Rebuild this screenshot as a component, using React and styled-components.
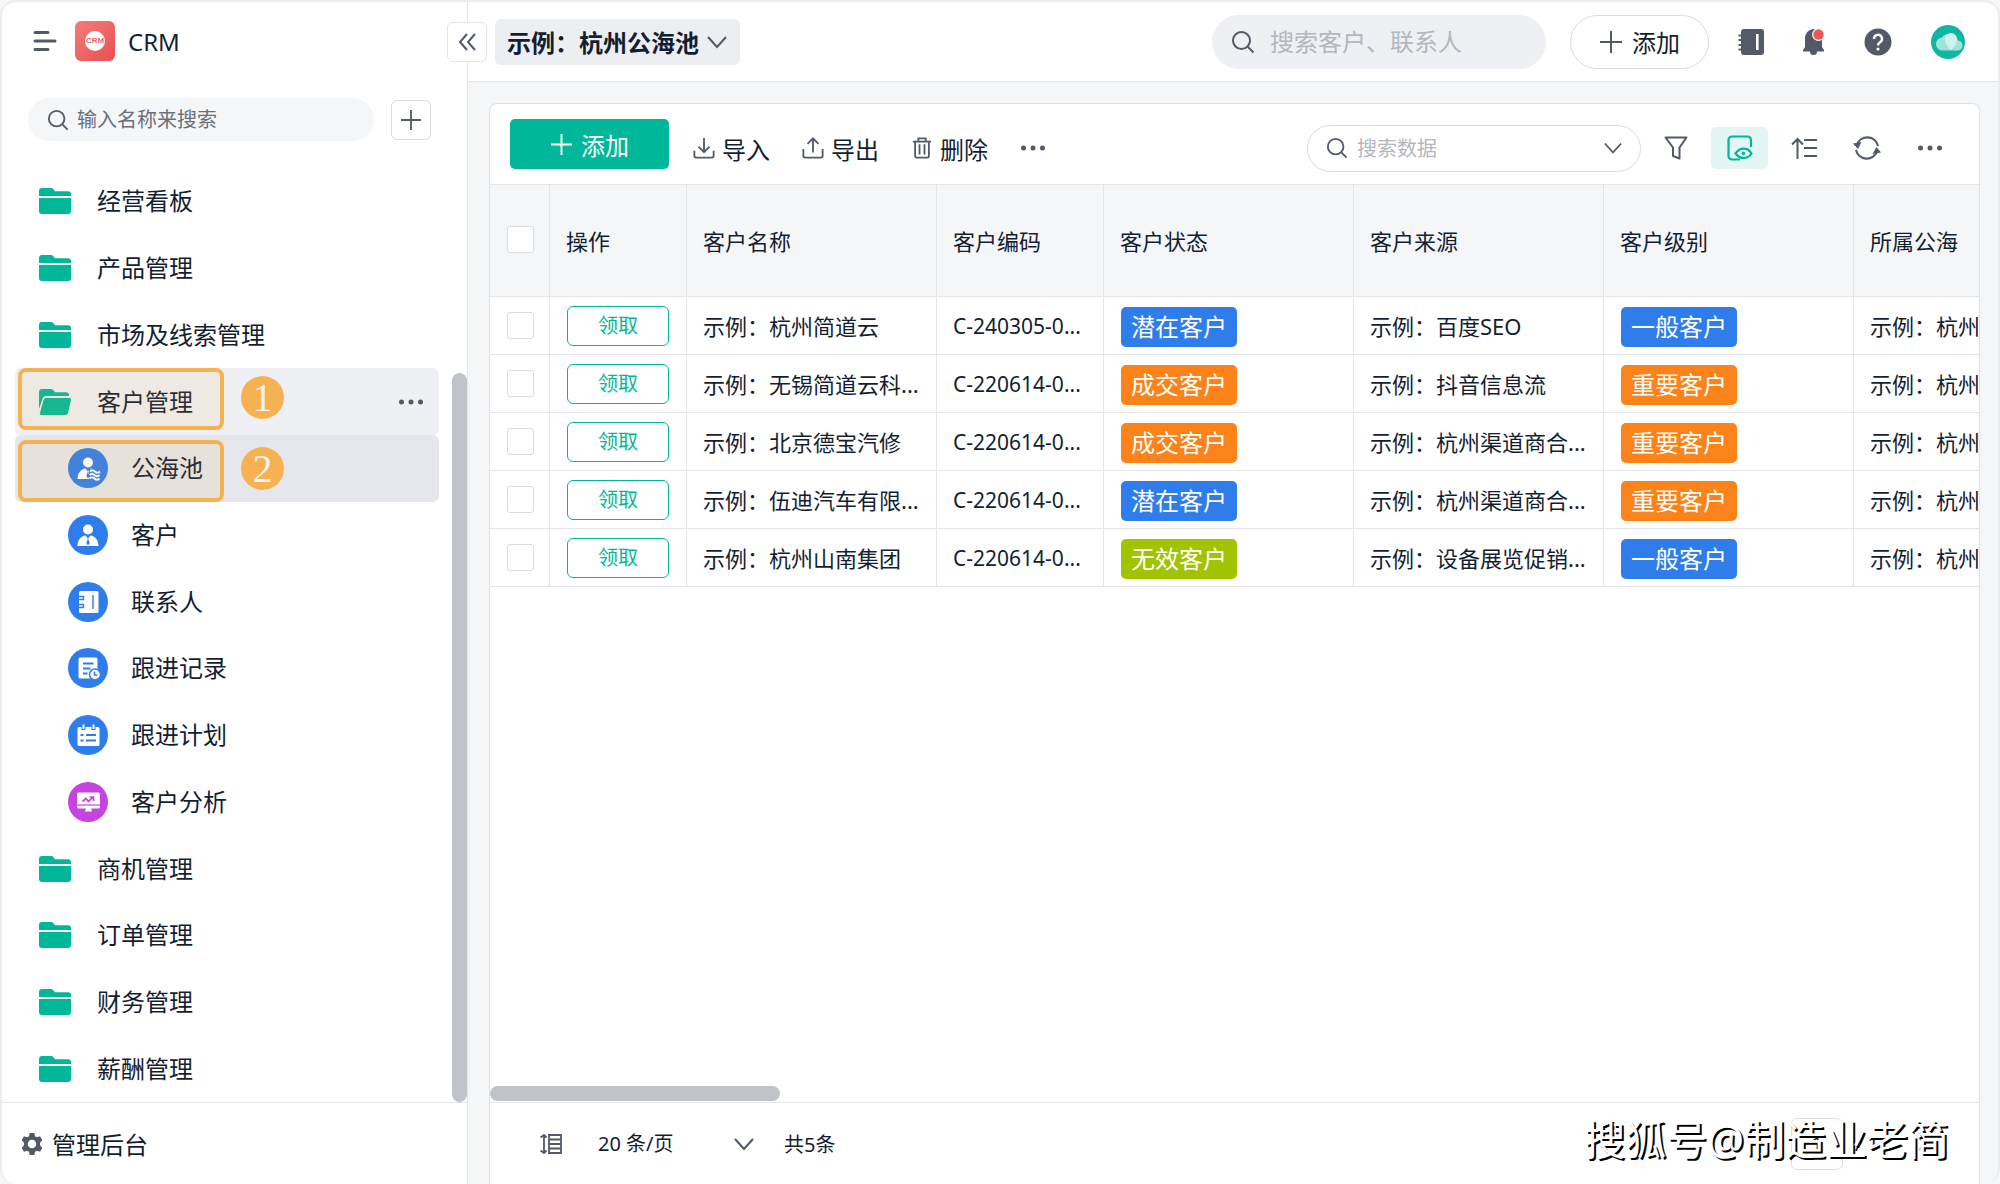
import React from "react";
import styled, { createGlobalStyle, css } from "styled-components";

const ink = "#141e31";
const slate = "#525967";
const green = "#00b899";
const blue = "#2f7deb";
const orange = "#fb8319";
const lime = "#a2c400";
const purple = "#c544e0";
const line = "#e3e5e8";

const GlobalStyle = createGlobalStyle`
  *, *::before, *::after { box-sizing: border-box; }
  body { margin: 0; background: #f7f7f8; }
  body, button, input, select {
    font-family: "Noto Sans", "Noto Sans CJK SC", sans-serif;
    color: ${ink};
  }
  button, input, select { border: 0; padding: 0; margin: 0; background: none; }
  button { cursor: pointer; }
  input, select { outline: none; }
  svg { display: block; flex: none; }
`;

/* ---------- icons ---------- */

const Svg = ({ w = 24, h = w, box = "0 0 24 24", children, ...rest }) => (
  <svg width={w} height={h} viewBox={box} fill="none" stroke={slate} strokeWidth="2" aria-hidden="true" {...rest}>
    {children}
  </svg>
);

const SearchIcon = ({ size = 22 }) => (
  <Svg w={size} stroke="#525967">
    <circle cx="10.5" cy="10.5" r="8.5" />
    <path d="M17 17l5.5 5.5" />
  </Svg>
);
const PlusIcon = ({ size = 24, color = slate }) => (
  <Svg w={size} stroke={color} strokeWidth="2"><path d="M12 1v22M1 12h22" /></Svg>
);
const ChevronIcon = ({ w = 20 }) => (
  <Svg w={w} h={14} box="0 0 20 14" stroke={slate}><path d="M1 2l9 10 9-10" /></Svg>
);
const DotsIcon = () => (
  <Svg w={26} h={8} box="0 0 26 8" stroke="none" fill={slate}>
    <circle cx="3.5" cy="4" r="2.500" /><circle cx="13" cy="4" r="2.500" /><circle cx="22.5" cy="4" r="2.500" />
  </Svg>
);
const MenuIcon = () => (
  <Svg w={26} h={22} box="0 0 26 22" strokeWidth="3" strokeLinecap="round">
    <path d="M3 2.500h13M3 11h20M3 19.500h13" />
  </Svg>
);
const CollapseIcon = () => (
  <Svg w={18} h={18} box="0 0 18 18"><path d="M9 1L2 9l7 8M17 1l-7 8 7 8" /></Svg>
);
const FolderIcon = () => (
  <Svg w={32} h={26} box="0 0 32 26" stroke="none" fill={green}>
    <path d="M0 8V3a3 3 0 0 1 3-3h9a3 3 0 0 1 2.400 1.200L16 3.300h13a3 3 0 0 1 3 3V8z" />
    <path d="M0 10h32v13a3 3 0 0 1-3 3H3a3 3 0 0 1-3-3z" />
  </Svg>
);
const OpenFolderIcon = () => (
  <Svg w={32} h={26} box="0 0 32 26" stroke="none" fill={green}>
    <path d="M0 20V3a3 3 0 0 1 3-3h9a3 3 0 0 1 2.400 1.200L16 3.300h11a3 3 0 0 1 3 3V7H7.500a4 4 0 0 0-4 3z" />
    <path d="M7 9h23.500a1.500 1.500 0 0 1 1.500 2l-3 13a3 3 0 0 1-3 2H2.500a1.500 1.500 0 0 1-1.500-2L4.500 11A3 3 0 0 1 7 9z" />
  </Svg>
);
const GearIcon = () => (
  <Svg w={24} stroke="none" fill={slate}>
    <path
      fillRule="evenodd"
      d="M9.700 1h4.600l.7 3.200 2 1.150 3.100-1 2.300 4-2.400 2.150v3l2.400 2.150-2.300 4-3.100-1-2 1.150-.7 3.200H9.700L9 19.800l-2-1.150-3.100 1-2.300-4L4 13.500v-3L1.600 8.350l2.300-4 3.100 1 2-1.150zM12 7.700a4.300 4.300 0 1 0 0 8.600 4.300 4.300 0 0 0 0-8.600z"
    />
  </Svg>
);
const ImportIcon = () => (
  <Svg w={22}><path d="M12 1v15M6 10.500l6 6 6-6M1.500 15v5.500a2 2 0 0 0 2 2h17a2 2 0 0 0 2-2V15" /></Svg>
);
const ExportIcon = () => (
  <Svg w={22}><path d="M12 17V1.500M6 7.500l6-6 6 6M1.500 13v7.500a2 2 0 0 0 2 2h17a2 2 0 0 0 2-2V13" /></Svg>
);
const TrashIcon = () => (
  <Svg w={22}><path d="M2 5h20M8 5V1.500h8V5M4.500 5v16a1.500 1.500 0 0 0 1.500 1.500h12a1.500 1.500 0 0 0 1.500-1.500V5M9.300 8v11M14.700 8v11" /></Svg>
);
const FilterIcon = () => (
  <Svg w={24} strokeLinejoin="round"><path d="M1.500 1.500h21l-7 10V22.500l-6.500-2.500v-8.500z" /></Svg>
);
const PreviewIcon = () => (
  <Svg w={26} box="0 0 26 26" stroke={green} strokeWidth="2.200">
    <path d="M13 24.500H5a3.500 3.500 0 0 1-3.500-3.500V5A3.500 3.500 0 0 1 5 1.500h15.500A3.500 3.500 0 0 1 24 5v7" />
    <path d="M8.500 18.500c4.500-6.500 12-6.500 16 0-4 6-11.500 6-16 0z" />
    <circle cx="16.500" cy="18.300" r="1.400" fill={green} strokeWidth="1" />
  </Svg>
);
const SortIcon = () => (
  <Svg w={26} h={22} box="0 0 26 22"><path d="M6.500 22V2M1 7.500L6.500 2 12 7.500M13 3h13M13 11h13M13 19h13" /></Svg>
);
const RefreshIcon = () => (
  <Svg w={28} h={26} box="0 0 28 26" strokeWidth="2.200">
    <path d="M4 9.500a11 11 0 0 1 21 1.500M24 16.500A11 11 0 0 1 3 15" />
    <path d="M0 8.500l8.500-1.500-3.500 7zM28 17.500l-8.500 1.500 4-7z" fill={slate} stroke="none" />
  </Svg>
);
const BookIcon = () => (
  <Svg w={26} box="0 0 26 26" stroke="none" fill={slate}>
    <path fillRule="evenodd" d="M6 0h17a3 3 0 0 1 3 3v20a3 3 0 0 1-3 3H6a3 3 0 0 1-3-3v-1.500H0.500v-2H3v-2.500H0.500v-2H3v-3H0.500v-2H3v-2.500H0.500v-2H3V3a3 3 0 0 1 3-3zm12 5v16h2.600V5z" />
  </Svg>
);
const BellIcon = () => (
  <Svg w={22} h={28} box="0 0 22 28" stroke="none">
    <path fill={slate} d="M10 1a9 9 0 0 1 9 9v9l2 3v1.500h-7a3.200 3.200 0 0 1-7 0H0V22l2-3v-9a9 9 0 0 1 8-9z" />
    <circle cx="15.500" cy="6.500" r="6.400" fill="#fff" />
    <circle cx="15.500" cy="6.500" r="5.200" fill="#f05656" />
  </Svg>
);
const HelpIcon = () => (
  <Svg w={28} box="0 0 28 28">
    <circle cx="14" cy="14" r="13.500" fill={slate} stroke="none" />
    <path d="M10 11a4 4 0 1 1 6 3.300c-1.400.8-2 1.500-2 3.200" stroke="#fff" strokeWidth="2.400" />
    <circle cx="14" cy="21" r="1.600" fill="#fff" stroke="none" />
  </Svg>
);
const AvatarIcon = () => (
  <Svg w={34} box="0 0 34 34" stroke="none">
    <circle cx="17" cy="17" r="17" fill="#10b5a3" />
    <path d="M12 25.500a6.500 6.500 0 0 1-1-13 9 9 0 0 1 16 3 5 5 0 0 1-1 10z" fill="#9fe3d8" />
    <path d="M14 14a6 6 0 0 1 12 0c0 5-3 8-6 11-3-3-6-6-6-11z" fill="#cff3ec" />
  </Svg>
);
const RowHeightIcon = () => (
  <Svg w={22} h={20} box="0 0 22 20" strokeWidth="1.800">
    <path d="M4 1v18M.5 3.500L4 1l2.500 2.500M.5 16.500L4 19l2.500-2.500M9 1h12v18H9zM9 5.500h12M9 10h12M9 14.500h12" />
  </Svg>
);
const PagerArrow = ({ flip }) => (
  <Svg w={14} h={14} box="0 0 14 14" stroke="#c3c6cc">
    <path d={flip ? "M4 1l6 6-6 6" : "M10 1L4 7l6 6"} />
  </Svg>
);

const person = (
  <>
    <circle cx="20" cy="14.500" r="5" />
    <path d="M9.500 31c0-6 3.500-10 8-10.500l2.500 3 2.500-3c4.500.5 8 4.500 8 10.500z" />
    <path d="M20 23l-1.600 5 1.600 2.500 1.600-2.500z" fill={blue} />
  </>
);
const glyphs = {
  pool: (
    <>
      {person}
      <path d="M21 21h11v10.500H21z" fill={blue} />
      <path d="M22 23.500q2.500-2.500 5 0t5 0M21.500 27q2.500-2.500 5 0t5 0M21.500 30.500q2.500-2.500 5 0t5 0" fill="none" stroke="#fff" strokeWidth="1.800" />
    </>
  ),
  person,
  contact: (
    <>
      <rect x="11" y="9" width="19.500" height="22" rx="1.500" />
      <path d="M25 13v14M10 14.500h5.500v3H10M10 22.500h5.500v3H10" fill="none" stroke={blue} strokeWidth="1.400" />
    </>
  ),
  record: (
    <>
      <rect x="10.500" y="9.500" width="19" height="21" rx="1.500" />
      <path d="M15 15.500h10.500M15 20.500h7.500M15 25.500h4.500" stroke={blue} strokeWidth="1.800" />
      <circle cx="27" cy="26.500" r="5.500" stroke={blue} strokeWidth="1.500" />
      <path d="M26.500 23.500v3.500h3" fill="none" stroke={blue} strokeWidth="1.500" />
    </>
  ),
  plan: (
    <>
      <rect x="9.500" y="12" width="22" height="19" rx="1.500" />
      <path d="M15.500 10v5M25.500 10v5" stroke={blue} strokeWidth="4" />
      <path d="M15.500 9.500v4.500M25.500 9.500v4.500" stroke="#fff" strokeWidth="2" />
      <path d="M12.500 20h3M18 20h10M12.500 25.500h3M18 25.500h10" stroke={blue} strokeWidth="2" />
    </>
  ),
  chart: (
    <>
      <rect x="9" y="10.500" width="23" height="16" rx="1.500" />
      <path d="M18 26h5l1 3.500h-7z" />
      <path d="M9 23h23" stroke={purple} strokeWidth="1.200" />
      <path d="M14.500 19.500l3.500-3 2.500 3 4.500-4.500M21.500 15h4v4" fill="none" stroke={purple} strokeWidth="1.700" />
    </>
  ),
};
const RoundIcon = ({ kind }) => (
  <Svg w={40} box="0 0 40 40" stroke="none" fill="#fff">
    <circle cx="20" cy="20" r="20" fill={kind === "chart" ? purple : blue} />
    {glyphs[kind]}
  </Svg>
);

/* ---------- frame ---------- */

const Shell = styled.div`
  display: grid;
  grid-template-columns: 466px minmax(0, 1fr);
  height: 100vh;
  background: #f4f6f8;
  border: 2px solid #ebecee;
  border-bottom: 0;
  border-radius: 16px;
  overflow: hidden;
`;

const Sidebar = styled.aside`
  position: relative;
  display: flex;
  flex-direction: column;
  min-height: 0;
  background: #fff;
  border-right: 1px solid ${line};
`;

const Brand = styled.header`
  display: flex;
  align-items: center;
  height: 78px;
  padding-left: 30px;
  font-size: 24px;
`;

const Logo = styled.span`
  display: grid;
  place-items: center;
  width: 40px;
  height: 40px;
  margin: 0 13px 0 17px;
  border-radius: 6px;
  background: linear-gradient(135deg, #f47c7c, #e85050);
`;

const LogoDisc = styled.span`
  width: 20px;
  height: 20px;
  border-radius: 50%;
  background: #fff;
  color: #ee6464;
  font: 700 8px/20px "Liberation Sans", sans-serif;
  text-align: center;
`;

const CollapseButton = styled.button`
  position: absolute;
  z-index: 2;
  top: 20px;
  right: -20px;
  display: grid;
  place-items: center;
  width: 40px;
  height: 40px;
  border: 1px solid ${line};
  border-radius: 6px;
  background: #fff;
`;

const SidebarSearch = styled.div`
  display: flex;
  align-items: center;
  gap: 17px;
  margin: 18px 36px 27px 26px;
`;

const Pill = styled.label`
  display: flex;
  flex: ${(p) => (p.$width ? "none" : "1")};
  align-items: center;
  min-width: 0;
  width: ${(p) => (p.$width ? `${p.$width}px` : "auto")};
  height: ${(p) => p.$height}px;
  padding: 0 18px;
  gap: ${(p) => p.$gap}px;
  border: 1px solid ${(p) => p.$border || "transparent"};
  border-radius: 28px;
  background: ${(p) => p.$fill || "#fff"};
`;

const TextInput = styled.input`
  flex: 1;
  min-width: 0;
  height: 40px;
  font-size: ${(p) => p.$size}px;
  &::placeholder {
    color: ${(p) => p.$hint};
    opacity: 1;
  }
`;

const SquareButton = styled.button`
  display: grid;
  flex: none;
  place-items: center;
  width: 40px;
  height: 40px;
  border: 1px solid #d9dbdf;
  border-radius: 6px;
  background: #fff;
`;

const NavArea = styled.div`
  display: flex;
  flex: 1;
  min-height: 0;
`;

const NavList = styled.nav`
  display: flex;
  flex: 1;
  flex-direction: column;
  padding: 0 13px;
`;

const NavItem = styled.div`
  position: relative;
  display: flex;
  flex: 1;
  align-items: center;
  border-radius: 6px;
  background: ${(p) => p.$fill || "transparent"};
`;

const NavLink = styled.a`
  display: flex;
  flex: 1;
  align-items: center;
  gap: ${(p) => (p.$nested ? 23 : 26)}px;
  padding-left: ${(p) => (p.$nested ? 53 : 24)}px;
  color: ${ink};
  font-size: 24px;
  line-height: 36px;
  text-decoration: none;
`;

const MoreButton = styled.button`
  margin-right: 15px;
`;

const Annotation = styled.div`
  position: absolute;
  top: ${(p) => p.$top}px;
  left: 3px;
  display: flex;
  align-items: center;
  gap: 17px;
  pointer-events: none;
`;

const Outline = styled.span`
  width: 206px;
  height: 62px;
  border: 4px solid #f6b150;
  border-radius: 8px;
  background: rgba(246, 177, 80, 0.1);
`;

const StepBadge = styled.span`
  width: 43px;
  height: 43px;
  margin-bottom: 4px;
  border-radius: 50%;
  background: #f6b150;
  color: #f2f2f5;
  font: 40px/43px "Liberation Serif", serif;
  text-align: center;
`;

const NavTrack = styled.div`
  display: flex;
  flex-direction: column;
  justify-content: flex-end;
  width: 15px;
`;

const NavThumb = styled.div`
  height: 78%;
  border-radius: 8px;
  background: #c0c3c8;
`;

const AdminLink = styled.a`
  display: flex;
  align-items: center;
  gap: 8px;
  height: 82px;
  padding-left: 18px;
  border-top: 1px solid ${line};
  color: ${ink};
  font-size: 24px;
  text-decoration: none;
`;

/* ---------- main column ---------- */

const Main = styled.main`
  display: flex;
  flex-direction: column;
  min-width: 0;
  min-height: 0;
`;

const TopBar = styled.header`
  display: flex;
  align-items: center;
  justify-content: space-between;
  height: 80px;
  padding: 0 33px 0 27px;
  border-bottom: 1px solid ${line};
  background: #fff;
`;

const TitleButton = styled.button`
  display: flex;
  align-items: center;
  gap: 7px;
  height: 46px;
  padding: 0 12px;
  border-radius: 6px;
  background: #edeef2;
  font-size: 24px;
  font-weight: 700;
`;

const TopActions = styled.div`
  display: flex;
  align-items: center;
  gap: ${(p) => p.$gap}px;
`;

const AddPill = styled.button`
  display: flex;
  align-items: center;
  justify-content: center;
  gap: 9px;
  width: 139px;
  height: 54px;
  margin-right: 5px;
  border: 1px solid #d9dbdf;
  border-radius: 27px;
  background: #fff;
  font-size: 24px;
`;

const Card = styled.section`
  display: flex;
  flex: 1;
  flex-direction: column;
  min-height: 0;
  margin: 21px 18px 0 21px;
  border: 1px solid #dfe1e5;
  border-bottom: 0;
  border-radius: 8px 8px 0 0;
  background: #fff;
  overflow: hidden;
`;

const Toolbar = styled.div`
  display: flex;
  justify-content: space-between;
  height: 80px;
  padding: 15px 36px 0 20px;
`;

const ToolGroup = styled.div`
  display: flex;
  align-items: center;
  height: 58px;
  gap: ${(p) => p.$gap}px;
`;

const PrimaryButton = styled.button`
  display: flex;
  align-self: flex-start;
  align-items: center;
  justify-content: center;
  gap: 8px;
  width: 159px;
  height: 50px;
  margin-right: -8px;
  border-radius: 5px;
  background: ${green};
  color: #fff;
  font-size: 24px;
`;

const ToolButton = styled.button`
  display: flex;
  align-items: center;
  gap: 7px;
  font-size: 24px;
  ${(p) =>
    p.$active &&
    css`
      justify-content: center;
      width: 57px;
      height: 42px;
      border-radius: 5px;
      background: #e3f6f3;
    `}
`;

const TableScroll = styled.div`
  flex: 1;
  min-height: 0;
  overflow: hidden;
`;

const DataTable = styled.table`
  width: 1614px;
  min-width: 100%;
  table-layout: fixed;
  border-spacing: 0;
  font-size: 22px;
  text-align: left;
`;

const cell = css`
  padding: 0 16px;
  border-right: 1px solid ${line};
  border-bottom: 1px solid ${line};
  white-space: nowrap;
  overflow: hidden;
`;

const HeadCell = styled.th`
  ${cell}
  height: 113px;
  padding-bottom: 2px;
  border-top: 1px solid ${line};
  background: #f4f6f8;
  font-weight: 400;
`;

const Cell = styled.td`
  ${cell}
  height: 58px;
`;

const TextCell = styled(Cell)`
  padding-bottom: 2px;
`;

const CodeCell = styled(Cell)`
  font-size: 21px;
`;

const Tick = styled.input.attrs({ type: "checkbox" })`
  appearance: none;
  display: block;
  width: 27px;
  height: 27px;
  margin-left: 1px;
  border: 1px solid #dadce0;
  border-radius: 3px;
  background: #fff;
`;

const ClaimButton = styled.button`
  display: block;
  width: 102px;
  height: 40px;
  margin-left: 1px;
  border: 1px solid ${green};
  border-radius: 6px;
  color: ${green};
  font-size: 20px;
  line-height: 36px;
`;

const Tag = styled.span`
  display: block;
  width: 116px;
  height: 40px;
  margin: 2px 0 0 1px;
  border-radius: 5px;
  background: ${(p) => p.$fill};
  color: #fff;
  font-size: 24px;
  line-height: 40px;
  text-align: center;
`;

const TableThumb = styled.div`
  width: 290px;
  height: 15px;
  margin-bottom: 1px;
  border-radius: 8px;
  background: #c0c3c8;
`;

const CardFooter = styled.footer`
  position: relative;
  display: flex;
  align-items: center;
  height: 82px;
  padding: 0 50px;
  border-top: 1px solid ${line};
  font-size: 20px;
`;

const SizePicker = styled.label`
  display: flex;
  align-items: center;
  margin: 0 30px 0 36px;
`;

const SizeSelect = styled.select`
  appearance: none;
  width: 136px;
  font-size: 20px;
`;

const Pager = styled.div`
  display: flex;
  align-items: center;
  gap: 12px;
  margin-left: auto;
`;

const PageInput = styled.input`
  width: 52px;
  height: 52px;
  margin-left: 14px;
  border: 1px solid #dcdee2;
  border-radius: 6px;
  font-size: 20px;
  text-align: center;
`;

const PageTotal = styled.span`
  margin-right: 24px;
`;

const Watermark = styled.span`
  position: absolute;
  right: 30px;
  bottom: 15px;
  color: #fff;
  font-size: 41px;
  line-height: 60px;
  text-shadow: 2px 2px 0 #000;
  white-space: nowrap;
`;

/* ---------- data ---------- */

const nav = [
  { label: "经营看板" },
  { label: "产品管理" },
  { label: "市场及线索管理" },
  { label: "客户管理", open: true, step: 1, top: 0, fill: "#eff0f4", more: true },
  { label: "公海池", kind: "pool", step: 2, top: 5, fill: "#e6e7ed" },
  { label: "客户", kind: "person" },
  { label: "联系人", kind: "contact" },
  { label: "跟进记录", kind: "record" },
  { label: "跟进计划", kind: "plan" },
  { label: "客户分析", kind: "chart" },
  { label: "商机管理" },
  { label: "订单管理" },
  { label: "财务管理" },
  { label: "薪酬管理" },
];

const columns = [
  ["操作", 137],
  ["客户名称", 250],
  ["客户编码", 167],
  ["客户状态", 250],
  ["客户来源", 250],
  ["客户级别", 250],
  ["所属公海", 250],
];

const tagFill = { 潜在客户: blue, 成交客户: orange, 无效客户: lime, 一般客户: blue, 重要客户: orange };

const rows = [
  ["示例：杭州简道云", "C-240305-0...", "潜在客户", "示例：百度SEO", "一般客户"],
  ["示例：无锡简道云科...", "C-220614-0...", "成交客户", "示例：抖音信息流", "重要客户"],
  ["示例：北京德宝汽修", "C-220614-0...", "成交客户", "示例：杭州渠道商合...", "重要客户"],
  ["示例：伍迪汽车有限...", "C-220614-0...", "潜在客户", "示例：杭州渠道商合...", "重要客户"],
  ["示例：杭州山南集团", "C-220614-0...", "无效客户", "示例：设备展览促销...", "一般客户"],
];

/* ---------- page ---------- */

function SideNav() {
  return (
    <Sidebar>
      <Brand>
        <button aria-label="菜单"><MenuIcon /></button>
        <Logo><LogoDisc>CRM</LogoDisc></Logo>
        CRM
      </Brand>
      <CollapseButton aria-label="收起"><CollapseIcon /></CollapseButton>
      <SidebarSearch>
        <Pill $height={43} $gap={8} $fill="#f4f6f8">
          <SearchIcon size={22} />
          <TextInput $size={20} $hint="#6a707b" placeholder="输入名称来搜索" aria-label="输入名称来搜索" />
        </Pill>
        <SquareButton aria-label="新建"><PlusIcon size={22} /></SquareButton>
      </SidebarSearch>
      <NavArea>
        <NavList>
          {nav.map((n) => (
            <NavItem key={n.label} $fill={n.fill}>
              <NavLink href="#" $nested={!!n.kind}>
                {n.kind ? <RoundIcon kind={n.kind} /> : n.open ? <OpenFolderIcon /> : <FolderIcon />}
                {n.label}
              </NavLink>
              {n.more && <MoreButton aria-label="更多"><DotsIcon /></MoreButton>}
              {n.step && (
                <Annotation $top={n.top}>
                  <Outline />
                  <StepBadge>{n.step}</StepBadge>
                </Annotation>
              )}
            </NavItem>
          ))}
        </NavList>
        <NavTrack><NavThumb /></NavTrack>
      </NavArea>
      <AdminLink href="#"><GearIcon />管理后台</AdminLink>
    </Sidebar>
  );
}

function Header() {
  return (
    <TopBar>
      <TitleButton>示例：杭州公海池<ChevronIcon w={22} /></TitleButton>
      <TopActions $gap={24}>
        <Pill $width={334} $height={54} $gap={15} $fill="#eff0f4">
          <SearchIcon size={24} />
          <TextInput $size={24} $hint="#b4b7bd" placeholder="搜索客户、联系人" aria-label="搜索客户、联系人" />
        </Pill>
        <AddPill><PlusIcon size={24} />添加</AddPill>
        <TopActions $gap={39}>
          <button aria-label="通讯录"><BookIcon /></button>
          <button aria-label="通知"><BellIcon /></button>
          <button aria-label="帮助"><HelpIcon /></button>
          <button aria-label="账户"><AvatarIcon /></button>
        </TopActions>
      </TopActions>
    </TopBar>
  );
}

function Tools() {
  return (
    <Toolbar>
      <ToolGroup $gap={32}>
        <PrimaryButton><PlusIcon size={23} color="#fff" />添加</PrimaryButton>
        <ToolButton><ImportIcon />导入</ToolButton>
        <ToolButton><ExportIcon />导出</ToolButton>
        <ToolButton><TrashIcon />删除</ToolButton>
        <ToolButton aria-label="更多"><DotsIcon /></ToolButton>
      </ToolGroup>
      <ToolGroup $gap={23}>
        <Pill $width={334} $height={47} $gap={9} $border="#d9dbdf">
          <SearchIcon size={22} />
          <TextInput $size={20} $hint="#b4b7bd" placeholder="搜索数据" aria-label="搜索数据" />
          <ChevronIcon w={18} />
        </Pill>
        <ToolButton aria-label="筛选"><FilterIcon /></ToolButton>
        <ToolButton $active aria-label="显示字段"><PreviewIcon /></ToolButton>
        <TopActions $gap={36}>
          <ToolButton aria-label="排序"><SortIcon /></ToolButton>
          <ToolButton aria-label="刷新"><RefreshIcon /></ToolButton>
          <ToolButton aria-label="更多"><DotsIcon /></ToolButton>
        </TopActions>
      </ToolGroup>
    </Toolbar>
  );
}

function Customers() {
  return (
    <TableScroll>
      <DataTable>
        <colgroup>
          <col width="60" />
          {columns.map(([name, width]) => <col key={name} width={width} />)}
        </colgroup>
        <thead>
          <tr>
            <HeadCell><Tick aria-label="全选" /></HeadCell>
            {columns.map(([name]) => <HeadCell key={name}>{name}</HeadCell>)}
          </tr>
        </thead>
        <tbody>
          {rows.map(([name, code, state, source, level]) => (
            <tr key={name}>
              <Cell><Tick aria-label={name} /></Cell>
              <Cell><ClaimButton>领取</ClaimButton></Cell>
              <TextCell>{name}</TextCell>
              <CodeCell>{code}</CodeCell>
              <Cell><Tag $fill={tagFill[state]}>{state}</Tag></Cell>
              <TextCell>{source}</TextCell>
              <Cell><Tag $fill={tagFill[level]}>{level}</Tag></Cell>
              <TextCell>示例：杭州</TextCell>
            </tr>
          ))}
        </tbody>
      </DataTable>
    </TableScroll>
  );
}

export default function App() {
  return (
    <>
      <GlobalStyle />
      <Shell>
        <SideNav />
        <Main>
          <Header />
          <Card>
            <Tools />
            <Customers />
            <TableThumb />
            <CardFooter>
              <button aria-label="行高"><RowHeightIcon /></button>
              <SizePicker>
                <SizeSelect aria-label="每页条数" defaultValue="20">
                  <option value="20">20 条/页</option>
                </SizeSelect>
                <ChevronIcon w={20} />
              </SizePicker>
              共5条
              <Pager>
                <PagerArrow />
                <PageInput defaultValue="1" aria-label="页码" />
                <PageTotal>/ 1</PageTotal>
                <PagerArrow flip />
              </Pager>
              <Watermark>搜狐号@制造业老简</Watermark>
            </CardFooter>
          </Card>
        </Main>
      </Shell>
    </>
  );
}
